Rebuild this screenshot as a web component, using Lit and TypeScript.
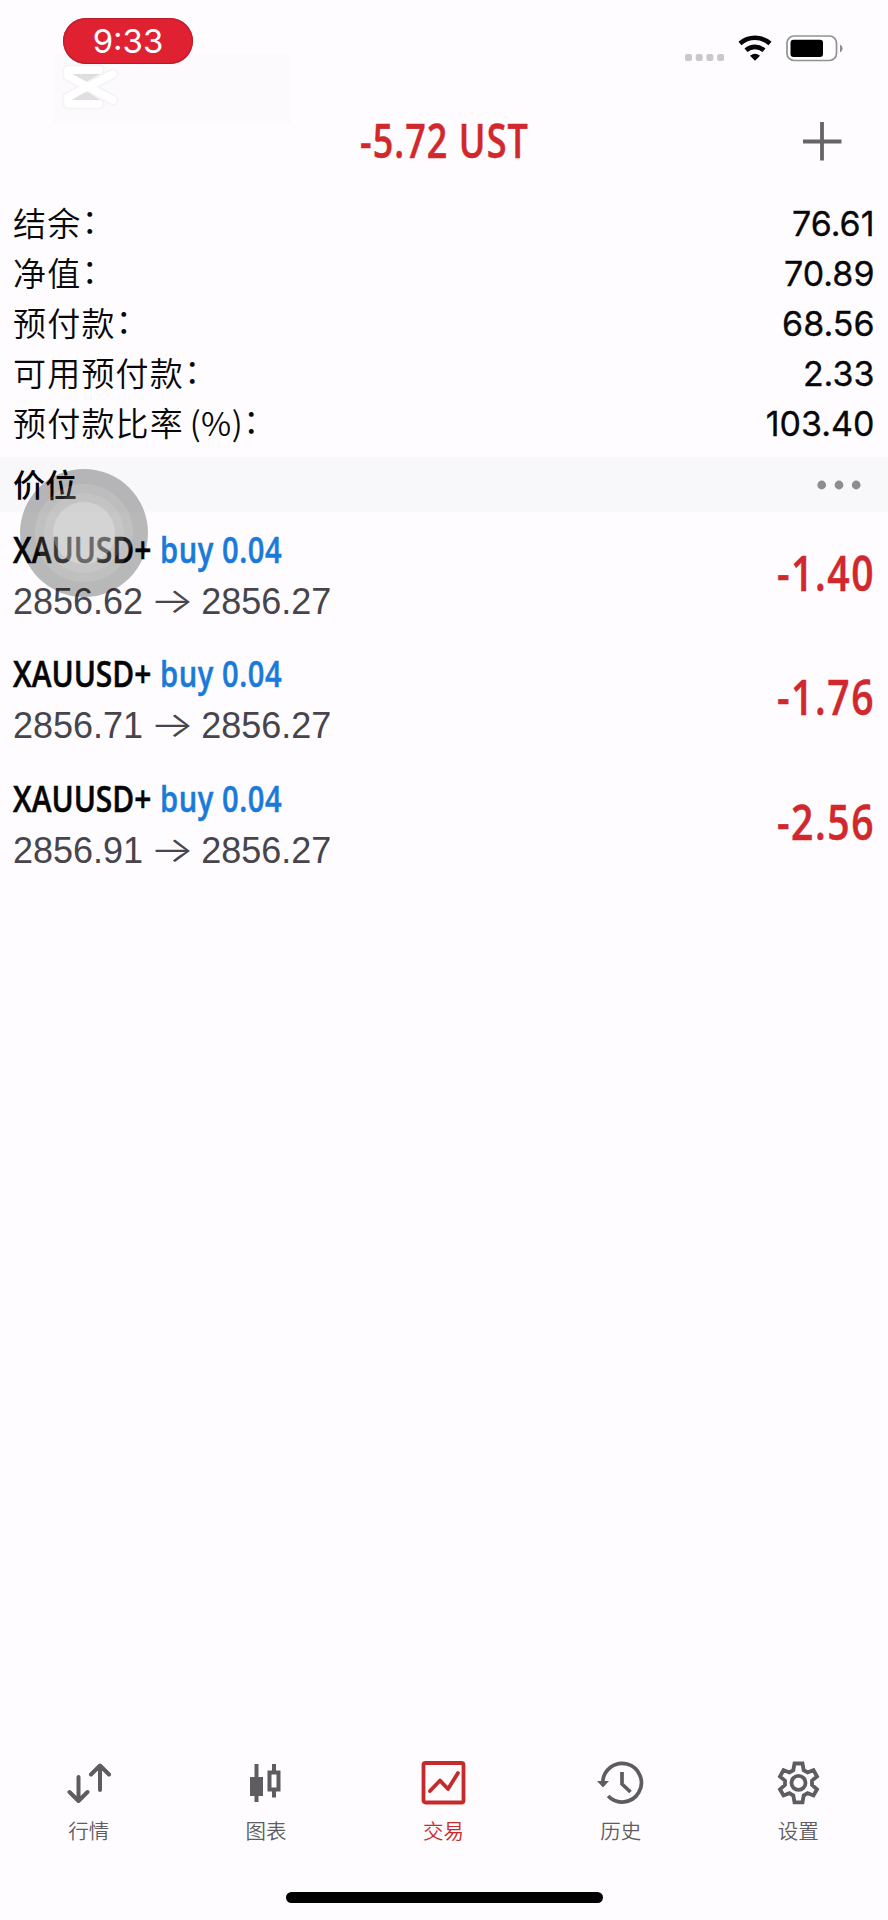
import { LitElement, html, css, svg } from "lit";
import { customElement, property, state } from "lit/decorators.js";
import { styleMap } from "lit/directives/style-map.js";

/** Condensed label: real text squeezed to a fixed run length. */
@customElement("condensed-text")
class CondensedText extends LitElement {
  static styles = css`
    :host { display: block; }
    .box { display: block; }
    .run { display: inline-block; white-space: pre; transform-origin: 0 50%; vertical-align: top;
      font-family: "Open Sans", "Noto Sans", sans-serif; font-weight: 600; -webkit-text-stroke: 0.5px currentColor; }
  `;
  @property() text = "";
  @property({ type: Number }) length = 100;
  @property({ type: Number }) size = 36;
  @property({ type: Number }) tracking = 0;
  @state() scale = 1;
  firstUpdated() {
    const run = this.renderRoot.querySelector(".run") as HTMLElement;
    this.scale = this.length / run.offsetWidth;
  }
  render() {
    const h = Math.round(this.size * 0.72) + "px";
    return html`<div class="box" style=${styleMap({ width: this.length + "px", height: h, fontSize: this.size + "px", lineHeight: h })}
      ><span class="run" style=${styleMap({ transform: `scaleX(${this.scale})`, letterSpacing: this.tracking + "em" })}>${this.text}</span></div>`;
  }
}

@customElement("status-bar")
class StatusBar extends LitElement {
  static styles = css`
    :host { display: flex; justify-content: space-between; height: 100px; position: relative; }
    .time {
      margin: 18px 0 0 63px; width: 130px; height: 46px; border-radius: 23px; background: #e02131;
      color: #fff; font: 400 33px/47px Inter, sans-serif; text-align: center; position: relative;
      box-shadow: inset 0 0 1px 1px #b51c2a;
    }
    .mark { position: absolute; left: 53px; top: 54px; }
    .icons { display: flex; margin: 34px 45.5px 0 0; }
    svg { display: block; }
  `;
  render() {
    return html`
      <svg class="mark" width="238" height="70">
        <rect width="238" height="70" fill="#fcfafd" />
        <g fill="none" stroke-linejoin="round" stroke-linecap="round">
          <path d="M15 22 V16 H46 M15 22 L60 46 M15 43 L60 20 M15 43 V50 H46" stroke="#f5f3f6" stroke-width="11" />
          <path d="M19 20H47L33 28Z M19 46L33 37L47 46Z" fill="#e0dee1" stroke="none" />
          <path d="M15 22 V16 H46 M15 22 L60 46 M15 43 L60 20 M15 43 V50 H46" stroke="#ffffff" stroke-width="7.500" />
        </g>
      </svg>
      <div class="time">9:33</div>
      <div class="icons">
        <svg width="159" height="30" viewBox="0 0 159 30">
          <g fill="#cac8cb">
            <rect x="1" y="20" width="7" height="7" rx="2" /><rect x="11.7" y="20" width="7" height="7" rx="2" />
            <rect x="22.4" y="20" width="7" height="7" rx="2" /><rect x="33.1" y="20" width="7" height="7" rx="2" />
          </g>
          <g fill="none" stroke="#050505" stroke-width="4.6">
            <path d="M56 9.5 A22.5 22.5 0 0 1 86 9.5" />
            <path d="M62 16.3 A13.6 13.6 0 0 1 80 16.3" />
          </g>
          <path d="M66 21.8 Q71 17.8 76 21.8 L71 26.8Z" fill="#050505" />
          <rect x="103" y="2" width="49.5" height="24.5" rx="7" fill="#fff" stroke="#929194" stroke-width="1.7" />
          <rect x="106.5" y="5.8" width="32.5" height="17.2" rx="3" fill="#000" />
          <path d="M156 10.5 Q158.6 12 158.6 14.5 Q158.6 17 156 18.5Z" fill="#8d8b8e" />
        </svg>
      </div>
    `;
  }
}

@customElement("account-summary")
class AccountSummary extends LitElement {
  static styles = css`
    :host { display: block; padding: 0 13.5px 0 13px; }
    .row { display: flex; justify-content: space-between; height: 50px; color: #08080a; }
    .label { font: 400 33px/48px "Noto Sans CJK SC", sans-serif; font-weight: 350; white-space: pre; letter-spacing: 1.2px; }
    .ratio { letter-spacing: 0.4px; margin-left: -2px; }
    .colon { vertical-align: 3px; line-height: 1; }
    .value { font: 400 34px/51px Inter, sans-serif; -webkit-text-stroke: 0.3px currentColor; }
  `;
  rows = [
    ["结余", "", "76.61"],
    ["净值", "", "70.89"],
    ["预付款", "", "68.56"],
    ["可用预付款", "", "2.33"],
    ["预付款比率", " (%)", "103.40"],
  ];
  render() {
    return this.rows.map(
      ([k, unit, v]) => html`<div class="row">
        <span class="label">${k}${unit ? html`<span class="ratio">${unit}</span>` : ""}<span class="colon">：</span></span>
        <span class="value">${v}</span>
      </div>`
    );
  }
}

@customElement("position-row")
class PositionRow extends LitElement {
  static styles = css`
    :host { display: flex; justify-content: space-between; height: 124.3px; padding: 0 13px 0 13px; }
    .head { display: flex; gap: 9px; margin-top: 25px; }
    .symbol { color: #050505; }
    .side { color: #1a7ad9; }
    .prices { display: flex; align-items: center; margin-top: 20px; height: 38px; color: #47454b;
      font: 400 36px/38px "Liberation Sans", Arial, sans-serif; }
    .arrow { width: 58px; text-align: center; font: 300 36px/38px Inter, sans-serif; transform: scaleX(1.3); margin-top: -4px; }
    .profit { color: #d0282c; margin-top: 43px; }
  `;
  @property() open = "";
  @property() profit = "";
  render() {
    return html`
      <div>
        <div class="head">
          <condensed-text class="symbol" text="XAUUSD+" .length=${138} .size=${36}></condensed-text>
          <condensed-text class="side" text="buy 0.04" .length=${122} .size=${36} .tracking=${0.02}></condensed-text>
        </div>
        <div class="prices"><span>${this.open}</span><span class="arrow">→</span><span>2856.27</span></div>
      </div>
      <condensed-text class="profit" text=${this.profit} .length=${98} .size=${49} .tracking=${0.04}></condensed-text>
    `;
  }
}

const ICONS = {
  quotes: svg`<g fill="none" stroke="currentColor" stroke-width="4" stroke-linecap="round" stroke-linejoin="round">
    <path d="M13.5 16V39M4.5 31L13.5 40L22.5 31M35 29V5M26 13.5L35 4.5L44 13.5"/></g>`,
  chart: svg`<g fill="currentColor"><path d="M11.5 3h4v13H20v19H15.5v6h-4v-6H7V16h4.5z"/>
    <path fill-rule="evenodd" d="M29 3h4v6.500h4.500v21H33v6h-4v-6h-4.500V9.500H29zM28.500 13.500v13h5v-13z"/></g>`,
  trade: svg`<g fill="none" stroke="currentColor" stroke-width="3.800" stroke-linecap="round" stroke-linejoin="round">
    <rect x="3.500" y="2" width="40" height="39.500" rx="2"/><path d="M10 30L20 19.500L28 28L38 12"/></g>`,
  history: svg`<g fill="none" stroke="currentColor" stroke-width="3.700"><path d="M5.800 22A19.300 19.300 0 1 1 11.100 35"/>
    <path d="M25 11V23L33.500 31"/></g><path d="M0 20H12L6 26.500Z" fill="currentColor"/>`,
  settings: svg`<g fill="none" stroke="currentColor" stroke-width="3.800" stroke-linejoin="miter">
    <path d="M19.500 2.500H27.500L28.700 9.200L32.600 11.500L38.500 9.200L42 15.500L37 19.600V24L42 28.300L38.500 34.500L32.600 32.200L28.700 34.500L27.500 41.300H19.500L18.300 34.500L14.400 32.200L8.500 34.500L5 28.300L10 24V19.600L5 15.500L8.500 9.200L14.400 11.500L18.300 9.200Z"/>
    <circle cx="23.500" cy="21.900" r="7"/></g>`,
};

@customElement("tab-bar")
class TabBar extends LitElement {
  static styles = css`
    :host { display: grid; grid-template-columns: repeat(5, 177.4px); }
    .tab { display: flex; flex-direction: column; align-items: center; color: #5e5c60; }
    .active { color: #c62b2b; }
    svg { display: block; }
    .name { font: 400 20.5px/30px "Noto Sans CJK SC", sans-serif; font-weight: 350; margin-top: 10px; }
  `;
  tabs: [keyof typeof ICONS, string][] = [
    ["quotes", "行情"], ["chart", "图表"], ["trade", "交易"], ["history", "历史"], ["settings", "设置"],
  ];
  render() {
    return this.tabs.map(
      ([icon, name]) => html`<div class="tab ${icon === "trade" ? "active" : ""}">
        <svg width="47" height="44" viewBox="0 0 47 44">${ICONS[icon]}</svg>
        <span class="name">${name}</span>
      </div>`
    );
  }
}

@customElement("app-root")
class AppRoot extends LitElement {
  static styles = css`
    :host { display: flex; flex-direction: column; width: 888px; height: 1920px; background: #fefcfe; position: relative; overflow: hidden; }
    .title { display: grid; grid-template-columns: 1fr auto 1fr; align-items: center; height: 81px; }
    .total { grid-column: 2; color: #d0282c; margin-top: -2px; }
    .plus { justify-self: end; margin-right: 46px; display: block; }
    .summary { margin-top: 17px; }
    .section { display: flex; align-items: center; justify-content: space-between; height: 55px; margin-top: 9px;
      padding: 0 27px 0 13px; background: #f8f7fa; color: #050505; font: 500 32px/53px "Noto Sans CJK SC", sans-serif; }
    .section span { height: 55px; }
    .tabs { margin-top: auto; }
    .home { width: 317px; height: 11px; border-radius: 6px; background: #000; margin: 47px auto 17px; }
    .touch { position: absolute; left: 20px; top: 469px; }
  `;
  positions = [["2856.62", "-1.40"], ["2856.71", "-1.76"], ["2856.91", "-2.56"]];
  render() {
    return html`
      <status-bar></status-bar>
      <div class="title">
        <condensed-text class="total" text="-5.72 UST" .length=${169} .size=${47} .tracking=${0.03}></condensed-text>
        <svg class="plus" width="40" height="40"><path d="M20 1V39.500M1 20.500H39.500" stroke="#666468" stroke-width="3.800" /></svg>
      </div>
      <account-summary class="summary"></account-summary>
      <div class="section">
        <span>价位</span>
        <svg width="44" height="10" fill="#8e8c90"><circle cx="4.700" cy="5" r="4.400" /><circle cx="22" cy="5" r="4.400" /><circle cx="39.200" cy="5" r="4.400" /></svg>
      </div>
      ${this.positions.map(([o, p]) => html`<position-row .open=${o} .profit=${p}></position-row>`)}
      <tab-bar class="tabs"></tab-bar>
      <div class="home"></div>
      <svg class="touch" width="128" height="128">
        <circle cx="64" cy="64" r="64" fill="#000" fill-opacity="0.270" />
        <circle cx="64" cy="64" r="49" fill="#fff" fill-opacity="0.120" />
        <circle cx="64" cy="64" r="40" fill="#fff" fill-opacity="0.100" />
        <circle cx="64" cy="64" r="31" fill="#fff" fill-opacity="0.250" />
      </svg>
    `;
  }
}
